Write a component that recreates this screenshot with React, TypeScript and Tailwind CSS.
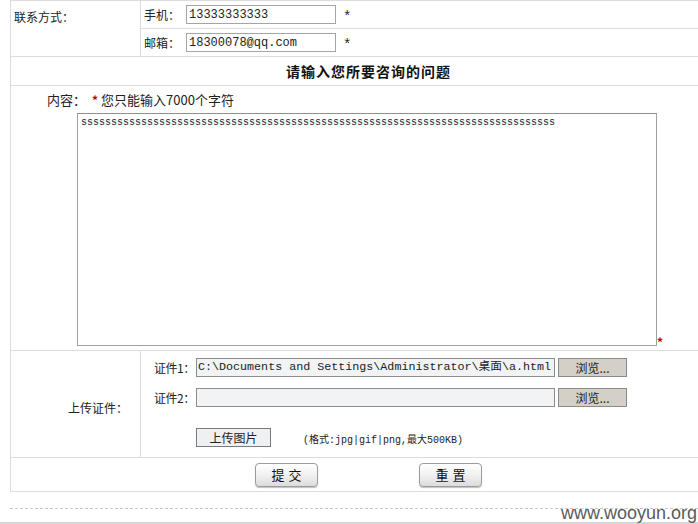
const cjk = "font-['SimSun','Noto_Sans_CJK_SC',sans-serif]"
const mono = "font-['Liberation_Mono','Noto_Sans_CJK_SC',monospace]"

function BrowseButton() {
  return (
    <div className={`w-[69px] h-[19px] shrink-0 bg-[#d4d0c8] border border-[#8a8a8a] text-[12px] text-[#222] flex items-center justify-center ${cjk}`}>
      浏览...
    </div>
  )
}

function RoundButton({ label }: { label: string }) {
  return (
    <div className={`w-[63px] h-[24px] rounded-[4px] border border-[#9c9c9c] bg-gradient-to-b from-white via-[#f1f1f1] to-[#dcdcdc] shadow-[0_1px_1px_rgba(0,0,0,0.25)] flex items-center justify-center text-[13px] text-[#111] tracking-[4px] pl-[4px] ${cjk}`}>
      {label}
    </div>
  )
}

export default function App() {
  const longText = 's'.repeat(79)

  return (
    <div className={`relative w-[698px] h-[524px] bg-white overflow-hidden text-[#222] ${cjk}`}>
      <div className="ml-[10px] w-[716px] border-l border-t border-b border-[#dcdcdc]">
        {/* 联系方式 */}
        <div className="flex border-b border-[#dcdcdc]">
          <div className="w-[130px] border-r border-[#dcdcdc] pl-[3px] pt-[7px] text-[12px]">联系方式：</div>
          <div className="flex-1">
            <div className="h-[28px] flex items-center pl-[3px] border-b border-[#dcdcdc]">
              <span className="text-[12px] w-[42px]">手机：</span>
              <div className={`w-[150px] h-[19px] border border-[#a5a5a5] bg-white flex items-center px-[2px] text-[12px] ${mono}`}>13333333333</div>
              <span className={`ml-[7px] mt-[5px] text-[14px] ${mono}`}>*</span>
            </div>
            <div className="h-[27px] flex items-center pl-[3px]">
              <span className="text-[12px] w-[42px]">邮箱：</span>
              <div className={`w-[150px] h-[19px] border border-[#a5a5a5] bg-white flex items-center px-[2px] text-[12px] ${mono}`}>18300078@qq.com</div>
              <span className={`ml-[7px] mt-[5px] text-[14px] ${mono}`}>*</span>
            </div>
          </div>
        </div>

        {/* 标题 */}
        <div className="h-[29px] border-b border-[#dcdcdc] flex items-center justify-center font-bold text-[14px] tracking-[1px] text-[#111]">
          请输入您所要咨询的问题
        </div>

        {/* 内容 */}
        <div className="h-[265px] border-b border-[#dcdcdc] pt-[6px]">
          <div className="flex items-center pl-[36px] text-[13px] leading-[16px]">
            <span>内容：</span>
            <span className="ml-[6px] mr-[3px] text-[#c00000] font-bold text-[12px]">*</span>
            <span>您只能输入7000个字符</span>
          </div>
          <div className="flex items-end pl-[66px] mt-[5px]">
            <div className={`w-[580px] h-[233px] border border-[#a0a0a0] border-t-[#8f8f8f] px-[3px] pt-[3px] text-[10px] leading-[12px] overflow-hidden ${mono}`}>
              {longText}
            </div>
            <span className="text-[#c00000] text-[12px] font-bold leading-[12px] mb-[-2px]">*</span>
          </div>
        </div>

        {/* 上传证件 */}
        <div className="flex h-[107px] border-b border-[#dcdcdc]">
          <div className="w-[130px] border-r border-[#dcdcdc] flex items-center justify-end pr-[12px] pt-[8px] text-[12px]">上传证件：</div>
          <div className="flex-1 pl-[13px] pt-[7px]">
            <div className="flex items-center gap-[3px]">
              <span className="w-[39px] shrink-0 whitespace-nowrap tracking-[-0.5px] text-[12px]">证件1：</span>
              <div className={`w-[359px] h-[19px] shrink-0 border border-[#8c8c8c] bg-[#f1f3f5] flex items-center pl-[1px] text-[11.7px] whitespace-nowrap overflow-hidden ${mono}`}>
                C:\Documents and Settings\Administrator\桌面\a.html
              </div>
              <BrowseButton />
            </div>
            <div className="flex items-center gap-[3px] mt-[11px]">
              <span className="w-[39px] shrink-0 whitespace-nowrap tracking-[-0.5px] text-[12px]">证件2：</span>
              <div className="w-[359px] h-[19px] shrink-0 border border-[#8c8c8c] bg-[#f1f3f5]" />
              <BrowseButton />
            </div>
            <div className="flex items-end mt-[21px] pl-[42px]">
              <div className="w-[75px] h-[19px] shrink-0 border border-[#7a7a7a] bg-[#eef0f2] flex items-center justify-center text-[12px]">上传图片</div>
              <span className={`ml-[32px] whitespace-nowrap text-[10px] leading-[12px] ${mono}`}>(格式:jpg|gif|png,最大500KB)</span>
            </div>
          </div>
        </div>

        {/* 按钮 */}
        <div className="h-[33px] flex items-center justify-center gap-[101px] pt-[1px]">
          <RoundButton label="提交" />
          <RoundButton label="重置" />
        </div>
      </div>

      <div className="ml-[10px] mt-[16px] border-t border-dashed border-[#c8c8c8]" />
      <div className="absolute left-0 right-0 bottom-0 h-[2px] bg-[#d6d6d6]" />
      <div className="absolute right-[1px] bottom-[1px] font-['Liberation_Sans',Arial,sans-serif] text-[18px] leading-[19px] text-[#5a5a5a]">
        www.wooyun.org
      </div>
    </div>
  )
}
